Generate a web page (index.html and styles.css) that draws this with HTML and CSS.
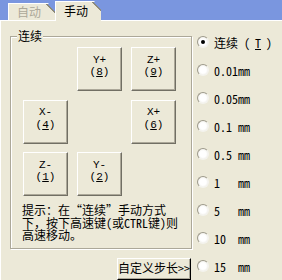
FILE: index.html
```html
<!DOCTYPE html>
<html lang="zh-CN">
<head>
    <meta charset="UTF-8">
    <meta name="viewport" content="width=device-width, initial-scale=1.0">
    <title>手动</title>
    <link rel="stylesheet" href="styles.css">
</head>
<body>
    <div class="tabs">
        <div class="tab tab-off">自动</div>
        <div class="tab tab-on">手动</div>
    </div>

    <div class="page">
        <div class="left">
            <div class="group">
                <span class="legend">连续</span>
                <div class="pad">
                    <button class="jog r1 c2">Y+<br>(<u>8</u>)</button>
                    <button class="jog r1 c3">Z+<br>(<u>9</u>)</button>
                    <button class="jog r2 c1">X-<br>(<u>4</u>)</button>
                    <button class="jog r2 c3">X+<br>(<u>6</u>)</button>
                    <button class="jog r3 c1">Z-<br>(<u>1</u>)</button>
                    <button class="jog r3 c2">Y-<br>(<u>2</u>)</button>
                </div>
                <p class="hint">提示：在“连续”手动方式<br>下，按下高速键(或CTRL键)则<br>高速移动。</p>
            </div>
            <button class="custom">自定义步长&gt;&gt;</button>
        </div>

        <div class="steps">
            <label class="step"><span class="dot checked"></span>连续 (<u>T</u>)</label>
            <label class="step"><span class="dot"></span>0.01mm</label>
            <label class="step"><span class="dot"></span>0.05mm</label>
            <label class="step"><span class="dot"></span>0.1 mm</label>
            <label class="step"><span class="dot"></span>0.5 mm</label>
            <label class="step"><span class="dot"></span>1   mm</label>
            <label class="step"><span class="dot"></span>5   mm</label>
            <label class="step"><span class="dot"></span>10  mm</label>
            <label class="step"><span class="dot"></span>15  mm</label>
        </div>
    </div>
</body>
</html>
```

FILE: styles.css
```css
* {
    margin: 0;
    padding: 0;
    box-sizing: border-box;
}
body {
    font-family: "Noto Sans Mono CJK SC", "Liberation Mono", "Noto Sans CJK SC", monospace;
    font-size: 12px;
    color: #000;
    background: #ece9d8;
    width: 282px;
    height: 280px;
    overflow: hidden;
}
u {
    text-underline-offset: 1px;
}

/* tab strip */
.tabs {
    position: relative;
    z-index: 1;
    display: flex;
    align-items: flex-end;
    height: 20px;
    padding-left: 8px;
    background: #7a96df;
}
.tab {
    line-height: 16px;
    padding-left: 8px;
    border-left: 1px solid #fff;
    border-top: 1px solid #fff;
    background: linear-gradient(225deg, transparent 5px, #8c8a7c 5px, #8c8a7c 6.4px, #ece9d8 6.4px);
    clip-path: polygon(0 0, calc(100% - 7px) 0, 100% 7px, 100% 100%, 0 100%);
}
.tab-off {
    width: 47px;
    height: 17px;
    color: #aca899;
}
.tab-on {
    width: 46px;
    height: 20px;
    margin-bottom: -1px;
    line-height: 18px;
}

/* page body */
.page {
    display: flex;
    height: 260px;
    border-top: 1px solid #fff;
    border-left: 1px solid #fff;
}
.left {
    display: flex;
    flex-direction: column;
    margin-left: 9px;
    margin-top: 15px;
}
.group {
    position: relative;
    width: 182px;
    height: 214px;
    padding: 10px 0 0 12px;
    border: 1px solid #aca899;
    box-shadow: inset 1px 1px 0 #fff, 1px 1px 0 #fff;
}
.legend {
    position: absolute;
    top: -7px;
    left: 6px;
    padding: 0 1px;
    line-height: 12px;
    background: #ece9d8;
}
.pad {
    display: grid;
    grid-template-columns: repeat(3, 45px);
    grid-template-rows: repeat(3, 44px);
    column-gap: 9px;
    row-gap: 8.5px;
}
.r1 { grid-row: 1; }
.r2 { grid-row: 2; }
.r3 { grid-row: 3; }
.c1 { grid-column: 1; }
.c2 { grid-column: 2; }
.c3 { grid-column: 3; }
.jog {
    font-family: "Liberation Mono", monospace;
    font-size: 11px;
    line-height: 12.5px;
    color: #000;
    padding-bottom: 6px;
    background: #ece9d8;
    border: 1px solid;
    border-color: #fff #716f64 #716f64 #fff;
    box-shadow: inset -1px -1px 0 #aca899;
}
.hint {
    margin: 8px 0 0 -1px;
    line-height: 12.5px;
}
.custom {
    align-self: flex-end;
    width: 74px;
    height: 22px;
    margin: 9px 1px 0 0;
    padding-bottom: 3px;
    font: inherit;
    color: #000;
    line-height: 12px;
    background: #ece9d8;
    border: 1px solid;
    border-color: #fff #000 #000 #fff;
    box-shadow: inset -1px -1px 0 #aca899;
}

/* step radios */
.steps {
    display: flex;
    flex-direction: column;
    margin-left: 5px;
    padding-top: 7px;
}
.step {
    display: flex;
    align-items: center;
    gap: 5px;
    height: 28.5px;
    white-space: pre;
}
.dot {
    position: relative;
    width: 12px;
    height: 12px;
    border-radius: 50%;
    border: 1px solid;
    border-color: #9d9a8c #f4f3ee #f4f3ee #9d9a8c;
    background: radial-gradient(circle, #fff 45%, #e4e2d8);
}
.dot.checked::after {
    content: "";
    position: absolute;
    top: 3px;
    left: 3px;
    width: 4px;
    height: 4px;
    border-radius: 50%;
    background: #000;
}
```
